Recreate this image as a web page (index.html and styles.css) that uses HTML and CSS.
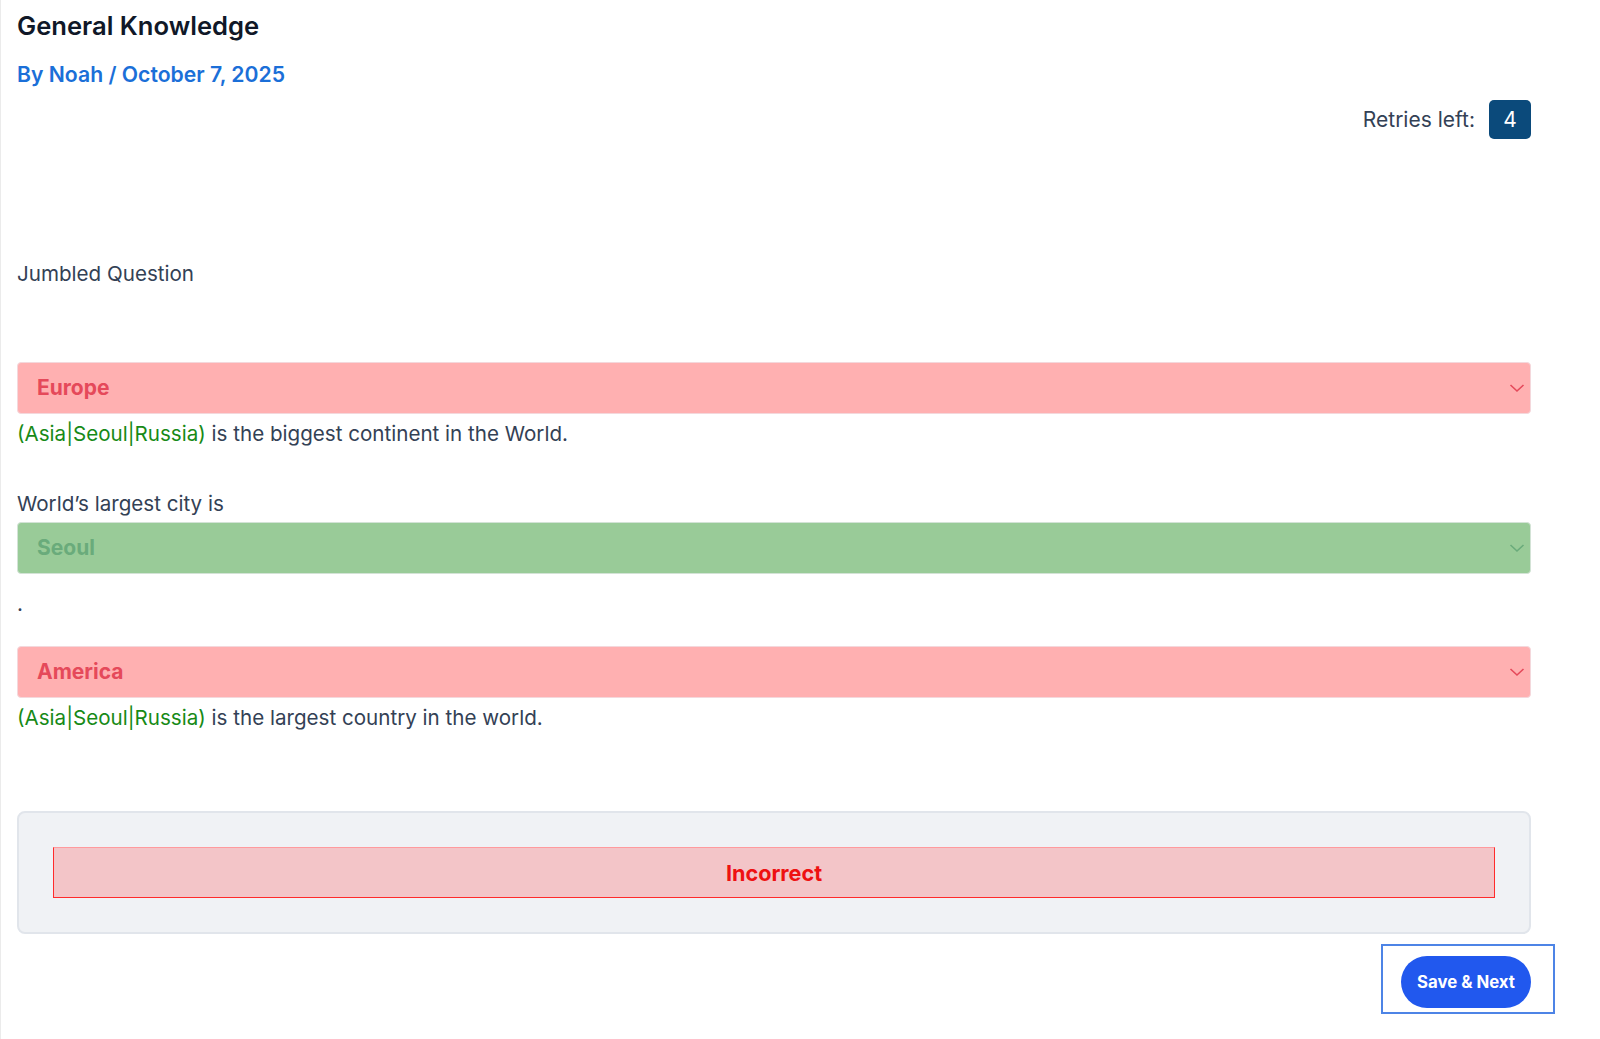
FILE: index.html
```html
<!DOCTYPE html>
<html lang="en">

<head>
    <meta charset="UTF-8">
    <meta name="viewport" content="width=device-width, initial-scale=1.0">
    <title>General Knowledge</title>
    <link rel="stylesheet" href="styles.css">
</head>

<body>
    <div class="page">
        <h1 class="quiz-title">General Knowledge</h1>
        <p class="meta">By Noah / October 7, 2025</p>

        <div class="retries">
            <span>Retries left:</span>
            <span class="retries-count">4</span>
        </div>

        <p class="quiz-type">Jumbled Question</p>

        <div class="question q1">
            <div class="select wrong">
                <span>Europe</span>
                <svg class="chevron" width="16" height="10" viewBox="0 0 16 10"><path d="M1.5 2 L8 8 L14.5 2" fill="none" stroke="currentColor" stroke-width="1.6"/></svg>
            </div>
            <p class="hint"><span class="answers">(Asia|Seoul|Russia)</span> is the biggest continent in the World.</p>
        </div>

        <div class="question q2">
            <p class="lead">World’s largest city is</p>
            <div class="select right">
                <span>Seoul</span>
                <svg class="chevron" width="16" height="10" viewBox="0 0 16 10"><path d="M1.5 2 L8 8 L14.5 2" fill="none" stroke="currentColor" stroke-width="1.6"/></svg>
            </div>
            <p class="hint dot">.</p>
        </div>

        <div class="question q3">
            <div class="select wrong">
                <span>America</span>
                <svg class="chevron" width="16" height="10" viewBox="0 0 16 10"><path d="M1.5 2 L8 8 L14.5 2" fill="none" stroke="currentColor" stroke-width="1.6"/></svg>
            </div>
            <p class="hint"><span class="answers">(Asia|Seoul|Russia)</span> is the largest country in the world.</p>
        </div>

        <div class="feedback">
            <div class="feedback-msg">Incorrect</div>
        </div>

        <div class="actions">
            <div class="focus-ring">
                <button class="btn-next">Save &amp; Next</button>
            </div>
        </div>
    </div>
</body>

</html>
```

FILE: styles.css
```css
body {
    margin: 0;
    font-family: Inter, 'Noto Sans', sans-serif;
    color: #334155;
    background: #fff;
}

.page {
    width: 1514px;
    padding: 10px 0 0 16px;
    border-left: 1px solid #ebebeb;
    min-height: 1029px;
}

p {
    margin: 0;
}

.quiz-title {
    margin: 0;
    font-size: 25.6px;
    line-height: 32px;
    font-weight: 600;
    color: #101828;
}

.meta {
    margin-top: 18px;
    font-size: 21.2px;
    line-height: 28px;
    font-weight: 600;
    color: #1b6fd8;
}

.retries {
    margin-top: 12px;
    display: flex;
    justify-content: flex-end;
    align-items: center;
    gap: 14px;
    font-size: 21px;
}

.retries-count {
    width: 42px;
    height: 39px;
    display: flex;
    align-items: center;
    justify-content: center;
    background: #0b4a7b;
    color: #fff;
    border-radius: 5px;
}

.quiz-type {
    margin-top: 121px;
    font-size: 20.6px;
    line-height: 28px;
}

.question {
    font-size: 20.6px;
    line-height: 28px;
}

.q1 {
    margin-top: 74px;
}

.q2 {
    margin-top: 42px;
}

.q3 {
    margin-top: 28px;
}

.lead {
    margin-bottom: 4px;
}

.select {
    height: 52px;
    box-sizing: border-box;
    display: flex;
    align-items: center;
    justify-content: space-between;
    padding: 0 5px 0 19px;
    border-radius: 4px;
    border: 1px solid #e8ecf0;
    font-size: 21px;
    font-weight: 700;
}

.select.wrong {
    background: #ffb0b1;
    border-color: #f4d8dc;
    color: #e5495a;
}

.select.right {
    background: #99cb98;
    border-color: #d3e3d6;
    color: #6aab7b;
}

.chevron {
    display: block;
}

.hint {
    margin-top: 6px;
}

.hint.dot {
    margin-top: 16px;
}

.answers {
    color: #178a17;
}

.feedback {
    margin-top: 79px;
    background: #f0f2f5;
    border: 2px solid #e1e5eb;
    border-radius: 8px;
    padding: 34px;
}

.feedback-msg {
    height: 51px;
    box-sizing: border-box;
    display: flex;
    align-items: center;
    justify-content: center;
    background: #f3c5c8;
    border: 1px solid #ff2b2b;
    border-top-color: #ff9a9d;
    color: #ee1111;
    font-size: 21.6px;
    font-weight: 700;
}

.actions {
    margin-top: 10px;
    display: flex;
    justify-content: flex-end;
    margin-right: -24px;
}

.focus-ring {
    border: 2px solid #4d84e6;
    padding: 10px 22px 4px 18px;
}

.btn-next {
    display: block;
    width: 130px;
    height: 52px;
    border: 0;
    border-radius: 26px;
    background: #2158ee;
    color: #fff;
    font-family: Inter, 'Noto Sans', sans-serif;
    font-size: 16.8px;
    font-weight: 700;
}
```
